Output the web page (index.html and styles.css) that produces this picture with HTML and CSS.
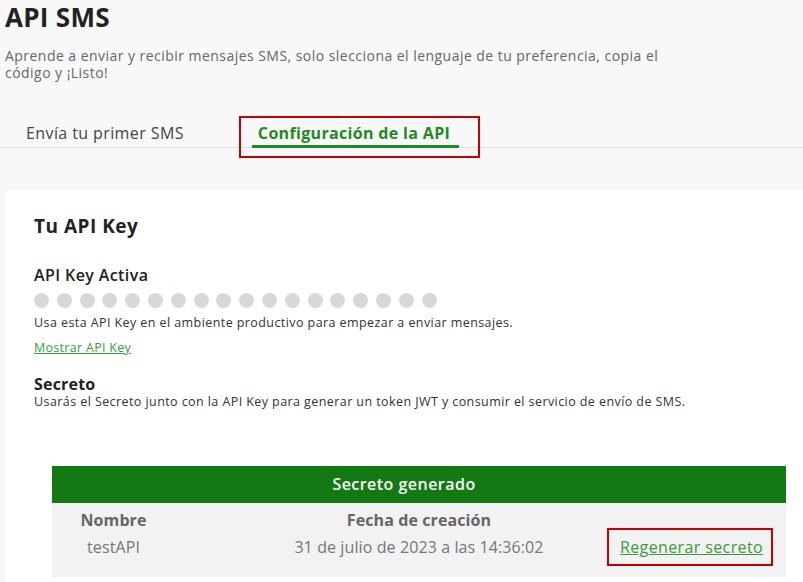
FILE: index.html
```html
<!DOCTYPE html>
<html lang="es">
<head>
<meta charset="utf-8">
<title>API SMS</title>
<link rel="stylesheet" href="styles.css">
</head>
<body>
<main class="page">
  <header class="intro">
    <h1 class="title">API SMS</h1>
    <p class="subtitle">Aprende a enviar y recibir mensajes SMS, solo slecciona el lenguaje de tu preferencia, copia el código y ¡Listo!</p>
  </header>

  <nav class="tabs">
    <a class="tab">Envía tu primer SMS</a>
    <a class="tab tab-active">Configuración de la API</a>
  </nav>

  <section class="card">
    <h2 class="card-title">Tu API Key</h2>
    <h3 class="label">API Key Activa</h3>
    <div class="dots">
      <span class="dot"></span><span class="dot"></span><span class="dot"></span><span class="dot"></span><span class="dot"></span><span class="dot"></span>
      <span class="dot"></span><span class="dot"></span><span class="dot"></span><span class="dot"></span><span class="dot"></span><span class="dot"></span>
      <span class="dot"></span><span class="dot"></span><span class="dot"></span><span class="dot"></span><span class="dot"></span><span class="dot"></span>
    </div>
    <p class="note">Usa esta API Key en el ambiente productivo para empezar a enviar mensajes.</p>
    <a class="link-small">Mostrar API Key</a>

    <h3 class="label label-secret">Secreto</h3>
    <p class="note note-tight">Usarás el Secreto junto con la API Key para generar un token JWT y consumir el servicio de envío de SMS.</p>

    <div class="secret-table">
      <div class="secret-head">Secreto generado</div>
      <div class="secret-body">
        <div class="th col-name">Nombre</div>
        <div class="th col-date">Fecha de creación</div>
        <div class="th"></div>
        <div class="td col-name">testAPI</div>
        <div class="td col-date">31 de julio de 2023 a las 14:36:02</div>
        <div class="td col-action"><a class="regen">Regenerar secreto</a></div>
      </div>
    </div>
  </section>
</main>
</body>
</html>
```

FILE: styles.css
```css
* { box-sizing: border-box; }

html, body {
  margin: 0;
  padding: 0;
  background: #f8f8f8;
  overflow: hidden;
}

body {
  font-family: "Open Sans", "Liberation Sans", sans-serif;
  color: #222;
}

.page {
  padding-top: 1px;
}

.intro {
  padding-left: 5px;
}

.title {
  margin: 0;
  font-size: 26px;
  line-height: 32px;
  font-weight: 700;
  letter-spacing: 0.3px;
  color: #222;
}

.subtitle {
  margin: 14px 0 0;
  max-width: 680px;
  font-size: 14px;
  line-height: 17px;
  letter-spacing: 0.46px;
  color: #666;
}

.tabs {
  display: flex;
  margin-top: 39px;
  padding-left: 20px;
  border-bottom: 1px solid #e2e2e2;
}

.tab {
  display: block;
  padding: 3px 6px 2px;
  font-size: 16px;
  line-height: 20px;
  letter-spacing: 0.4px;
  color: #444;
  border-bottom: 3px solid transparent;
  margin-bottom: -1px;
}

.tab + .tab {
  margin-left: 62px;
}

.tab-active {
  position: relative;
  color: #1f8a22;
  font-weight: 700;
  letter-spacing: 0.33px;
  border-bottom-color: #1f8a22;
  padding-right: 9px;
}

.tab-active::after {
  content: "";
  position: absolute;
  left: -13px;
  right: -21px;
  top: -4px;
  bottom: -13px;
  border: 2px solid #c40000;
}

.card {
  margin: 42px -20px 0 5px;
  background: #fff;
  border-radius: 6px;
  padding: 24px 0 40px 29px;
}

.card-title {
  margin: 0;
  font-size: 19px;
  line-height: 24px;
  font-weight: 700;
  letter-spacing: 0.5px;
  color: #222;
}

.label {
  margin: 27px 0 0;
  font-size: 16px;
  line-height: 20px;
  font-weight: 600;
  letter-spacing: 0.4px;
  color: #222;
}

.label-secret {
  margin-top: 18px;
  line-height: 19px;
  font-weight: 700;
  letter-spacing: 0.2px;
}

.dots {
  display: flex;
  gap: 7.8px;
  margin-top: 8px;
}

.dot {
  width: 15px;
  height: 15px;
  border-radius: 50%;
  background: #d8d8d8;
}

.note {
  margin: 7px 0 0;
  font-size: 12.5px;
  line-height: 16px;
  letter-spacing: 0.42px;
  color: #333;
}

.note-tight {
  margin-top: 0;
}

.link-small {
  display: inline-block;
  margin-top: 9px;
  font-size: 12.5px;
  line-height: 16px;
  letter-spacing: 0.3px;
  color: #3c9a3c;
  text-decoration: underline;
}

.secret-table {
  margin: 56px 0 0 18px;
  width: 734px;
}

.secret-head {
  background: #137a13;
  color: #fff;
  text-align: center;
  padding-right: 30px;
  font-size: 16px;
  line-height: 37px;
  font-weight: 600;
  letter-spacing: 0.47px;
}

.secret-body {
  display: grid;
  grid-template-columns: 123px 1fr 166px;
  align-items: center;
  background: #f2f2f2;
  padding: 9px 13px 11px 0;
  font-size: 16px;
}

.th {
  line-height: 16px;
  font-weight: 700;
  letter-spacing: 0.1px;
  color: #666;
  text-align: center;
}

.td {
  line-height: 20px;
  color: #777;
  text-align: center;
  letter-spacing: 0.1px;
}

.col-date {
  padding-left: 56px;
}

.col-action {
  text-align: left;
}

.regen {
  display: block;
  border: 2px solid #c40000;
  padding: 7px 9px 7px 11px;
  color: #3c9a3c;
  letter-spacing: 0.38px;
  text-decoration: underline;
  white-space: nowrap;
}
```
